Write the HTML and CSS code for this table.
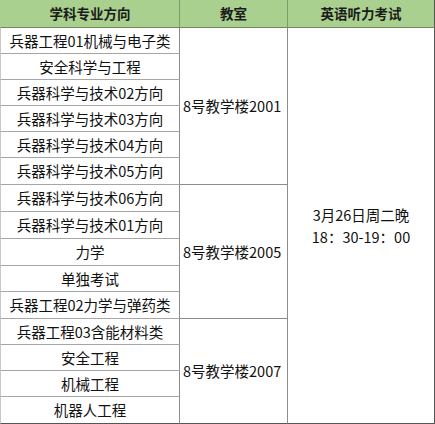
FILE: index.html
```html
<!DOCTYPE html>
<html lang="zh-CN">
<head>
<meta charset="utf-8">
<title>英语听力考试安排</title>
<link rel="stylesheet" href="styles.css">
</head>
<body>
<div class="sheet">
  <div class="cell head c1">学科专业方向</div>
  <div class="cell head c2">教室</div>
  <div class="cell head c3">英语听力考试</div>

  <div class="cell major">兵器工程01机械与电子类</div>
  <div class="cell room g1">8号教学楼2001</div>
  <div class="cell time">3月26日周二晚<br>18：30-19：00</div>
  <div class="cell major">安全科学与工程</div>
  <div class="cell major">兵器科学与技术02方向</div>
  <div class="cell major">兵器科学与技术03方向</div>
  <div class="cell major">兵器科学与技术04方向</div>
  <div class="cell major">兵器科学与技术05方向</div>

  <div class="cell major">兵器科学与技术06方向</div>
  <div class="cell room g2">8号教学楼2005</div>
  <div class="cell major">兵器科学与技术01方向</div>
  <div class="cell major">力学</div>
  <div class="cell major">单独考试</div>
  <div class="cell major">兵器工程02力学与弹药类</div>

  <div class="cell major">兵器工程03含能材料类</div>
  <div class="cell room g3">8号教学楼2007</div>
  <div class="cell major">安全工程</div>
  <div class="cell major">机械工程</div>
  <div class="cell major">机器人工程</div>
</div>
</body>
</html>
```

FILE: styles.css
```css
html, body {
  margin: 0;
  padding: 0;
  background: #ffffff;
}

.sheet {
  display: grid;
  grid-template-columns: 180px 108px 147px;
  grid-template-rows: 28px 26px 26px 26px 26px 26px 27px 27px 27px 27px 26px 27px 26px 26px 26px 27px;
  width: 435px;
  font-family: "Noto Sans CJK SC", "Microsoft YaHei", sans-serif;
  font-size: 14.5px;
  color: #111111;
}

.cell {
  box-sizing: border-box;
  display: flex;
  align-items: center;
  justify-content: center;
  line-height: 1.2;
  white-space: nowrap;
  border-right: 1px solid #8c8c8c;
  border-bottom: 1px solid #a6a6a6;
}

.head {
  background: #a9d08e;
  font-weight: bold;
  font-size: 13.5px;
  color: #1b1b1b;
  border-bottom: 1px solid #6f8a5c;
  border-right: 1px solid #7f9a6c;
}

.c1 {
  grid-column: 1;
  border-left: 1px solid #a9d08e;
}

.c2 {
  grid-column: 2;
}

.c3 {
  grid-column: 3;
  border-right: 1px solid #555555;
}

.major {
  grid-column: 1;
  border-left: 1px solid #c8c8c8;
}

.room {
  grid-column: 2;
  justify-content: flex-start;
  padding-left: 3px;
  border-bottom: 1px solid #8c8c8c;
}

.g1 {
  grid-row: 2 / span 6;
}

.g2 {
  grid-row: 8 / span 5;
}

.g3 {
  grid-row: 13 / span 4;
  border-bottom: 1px solid #555555;
}

.time {
  grid-column: 3;
  grid-row: 2 / span 15;
  text-align: center;
  line-height: 22px;
  border-right: 1px solid #555555;
  border-bottom: 1px solid #555555;
}

.major:last-child {
  border-bottom: 1px solid #555555;
}
```
